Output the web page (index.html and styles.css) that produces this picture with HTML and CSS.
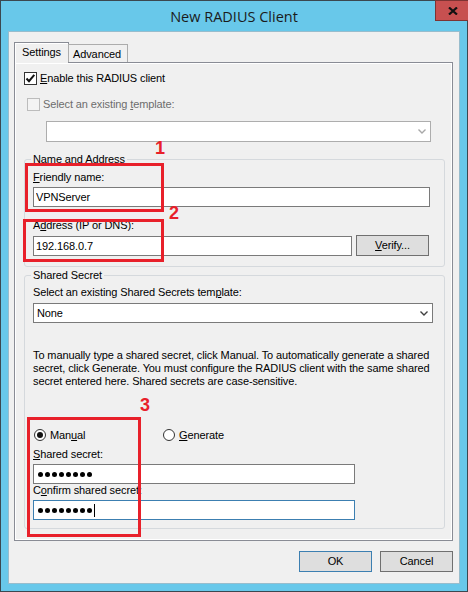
FILE: index.html
```html
<!DOCTYPE html>
<html lang="en">
<head>
    <meta charset="UTF-8">
    <meta name="viewport" content="width=device-width, initial-scale=1.0">
    <title>New RADIUS Client</title>
    <link rel="stylesheet" href="styles.css">
</head>
<body>
    <div class="window">
        <div class="titlebar">
            <span class="title">New RADIUS Client</span>
            <button class="close-btn" type="button" aria-label="Close">
                <svg width="10" height="8" viewBox="0 0 10 8"><path d="M1 0.5 L9 7.5 M9 0.5 L1 7.5" stroke="#111" stroke-width="2.2"/></svg>
            </button>
        </div>

        <div class="client">
            <div class="tabs">
                <div class="tab active">Settings</div>
                <div class="tab">Advanced</div>
            </div>

            <div class="tab-panel">
                <label class="check-row">
                    <span class="checkbox"><svg width="11" height="11" viewBox="0 0 11 11"><path d="M1.5 5.5 L4 8.2 L9.3 1.8" fill="none" stroke="#111" stroke-width="2"/></svg></span>
                    <span><u>E</u>nable this RADIUS client</span>
                </label>
                <label class="check-row disabled template-row">
                    <span class="checkbox"></span>
                    <span>Select an existing <u>t</u>emplate:</span>
                </label>
                <div class="combo combo-template disabled">
                    <span></span>
                    <svg width="8" height="5" viewBox="0 0 8 5"><path d="M0.5 0.5 L4 4 L7.5 0.5" fill="none" stroke="#a8a8a8" stroke-width="1.4"/></svg>
                </div>

                <fieldset class="group group-address">
                    <legend>Name and Address</legend>
                    <div class="field-label"><u>F</u>riendly name:</div>
                    <input class="textbox tb-friendly" type="text" value="VPNServer">
                    <div class="field-label spaced">A<u>d</u>dress (IP or DNS):</div>
                    <div class="address-row">
                        <input class="textbox tb-address" type="text" value="192.168.0.7">
                        <button class="btn" type="button"><u>V</u>erify...</button>
                    </div>
                </fieldset>

                <fieldset class="group group-secret">
                    <legend>Shared Secret</legend>
                    <div class="field-label">Select an existing Shared Secrets tem<u>p</u>late:</div>
                    <div class="combo combo-secret">
                        <span>None</span>
                        <svg width="8" height="5" viewBox="0 0 8 5"><path d="M0.5 0.5 L4 4 L7.5 0.5" fill="none" stroke="#404040" stroke-width="1.4"/></svg>
                    </div>
                    <p class="hint">To manually type a shared secret, click Manual. To automatically generate a shared<br>secret, click Generate. You must configure the RADIUS client with the same shared<br>secret entered here. Shared secrets are case-sensitive.</p>
                    <div class="radio-row">
                        <label class="radio-option manual"><span class="radio checked"></span><span>Man<u>u</u>al</span></label>
                        <label class="radio-option"><span class="radio"></span><span><u>G</u>enerate</span></label>
                    </div>
                    <div class="field-label secret-label"><u>S</u>hared secret:</div>
                    <div class="textbox tb-secret">
                        <span class="dot"></span><span class="dot"></span><span class="dot"></span><span class="dot"></span><span class="dot"></span><span class="dot"></span><span class="dot"></span><span class="dot"></span>
                    </div>
                    <div class="field-label">C<u>o</u>nfirm shared secret:</div>
                    <div class="textbox tb-secret focused">
                        <span class="dot"></span><span class="dot"></span><span class="dot"></span><span class="dot"></span><span class="dot"></span><span class="dot"></span><span class="dot"></span><span class="dot"></span><span class="caret"></span>
                    </div>
                </fieldset>
            </div>

            <div class="button-row">
                <button class="btn btn-default" type="button">OK</button>
                <button class="btn" type="button">Cancel</button>
            </div>
        </div>

        <!-- annotation overlay -->
        <div class="mark mark-1"></div>
        <div class="mark mark-2"></div>
        <div class="mark mark-3"></div>
        <span class="mark-num num-1">1</span>
        <span class="mark-num num-2">2</span>
        <span class="mark-num num-3">3</span>
    </div>
</body>
</html>
```

FILE: styles.css
```css
body { margin: 0; font-family: "Liberation Sans", Arial, sans-serif; font-size: 11px; line-height: 13px; color: #000; letter-spacing: -0.11px; }
u { text-decoration: underline; text-underline-offset: 1px; }

.window { position: relative; width: 468px; height: 592px; box-sizing: border-box; border: 1px solid #3b4850; background: #68c8ea; padding: 0 7px 7px; display: flex; flex-direction: column; }

.titlebar { height: 30px; display: flex; justify-content: center; align-items: center; }
.title { font-family: "Open Sans", sans-serif; font-size: 14.5px; letter-spacing: 0; color: #1b1b1b; margin-top: 1px; }
.close-btn { position: absolute; top: -1px; right: -3px; width: 35px; height: 21px; padding: 0; border: 1px solid #7d3333; background: #c75050; display: flex; align-items: center; justify-content: center; }

.client { flex: 1; background: #f0f0f0; border: 1px solid #98bdcd; padding: 10px 6px 0 5px; display: flex; flex-direction: column; }

.tabs { display: flex; align-items: flex-end; margin-bottom: -1px; position: relative; z-index: 1; }
.tab { box-sizing: border-box; border: 1px solid #acacac; border-bottom: none; background: #f0f0f0; padding: 3px 0 0 4px; }
.tab.active { width: 55px; height: 21px; border-color: #898c95; padding-left: 7px; box-shadow: inset 1px 1px 0 #fff; }
.tab:not(.active) { width: 60px; height: 18px; margin-left: -1px; margin-bottom: 1px; }

.tab-panel { height: 479px; box-sizing: border-box; border: 1px solid #898c95; box-shadow: inset 0 0 0 1px #fff; padding: 9px 7px 9px 9px; display: flex; flex-direction: column; }

.check-row { display: flex; align-items: center; gap: 3px; height: 13px; }
.checkbox { width: 13px; height: 13px; box-sizing: border-box; border: 1px solid #333; background: #fff; display: flex; align-items: center; justify-content: center; }
.check-row.disabled { color: #6d6d6d; }
.check-row.disabled .checkbox { border-color: #bcbcbc; background: #f3f3f3; }
.template-row { margin: 13px 0 0 3px; }

.combo { height: 21px; box-sizing: border-box; border: 1px solid #7a7a7a; background: #fff; display: flex; align-items: center; justify-content: space-between; padding: 0 4px 0 3px; }
.combo-template { width: 385px; margin: 10px 0 0 22px; border-color: #adadad; }
.combo-secret { width: 400px; height: 20px; margin-top: 4px; }

.group { margin: 11px 0 0; padding: 5px 8px 10px; border: 1px solid #d5d9dd; border-radius: 3px; min-width: 0; }
.group legend { padding: 0 2px; margin-left: -2px; }
.group-secret { margin-top: 2px; padding-top: 4px; padding-bottom: 8px; }

.field-label { height: 13px; }
.field-label.spaced { margin-top: 12px; }

.textbox { display: block; height: 20px; box-sizing: border-box; border: 1px solid #7a7a7a; background: #fff; margin: 3px 0 0; padding: 0 2px; font: inherit; letter-spacing: inherit; color: #000; outline: none; }
.tb-friendly { width: 397px; }
.address-row { display: flex; align-items: center; gap: 4px; margin-top: 3px; }
.address-row .textbox { margin: 0; }
.tb-address { width: 319px; }

.hint { margin: 26px 0 0; }

.radio-row { display: flex; align-items: center; height: 14px; margin-top: 40px; padding-left: 1px; }
.radio-option { display: flex; align-items: center; gap: 4px; }
.radio-option.manual { width: 129px; }
.radio { width: 12px; height: 12px; box-sizing: border-box; border: 1px solid #333; border-radius: 50%; background: #fff; display: flex; align-items: center; justify-content: center; }
.radio.checked::after { content: ""; width: 6px; height: 6px; border-radius: 50%; background: #111; }

.secret-label { margin-top: 6px; }
.tb-secret { width: 322px; display: flex; align-items: center; gap: 2px; padding-left: 4px; }
.tb-secret.focused { border-color: #3c7fb1; }
.dot { width: 5px; height: 5px; border-radius: 50%; background: #000; }
.caret { width: 1px; height: 13px; background: #000; margin-left: 0; }

.button-row { display: flex; justify-content: flex-end; gap: 8px; margin-top: 10px; }
.btn { width: 73px; height: 21px; box-sizing: border-box; border: 1px solid #707070; background: #dedede; padding: 0; font: inherit; letter-spacing: inherit; color: #000; }
.btn-default { border-color: #3c7fb1; }

.mark { position: absolute; border: 3px solid #e8202a; box-sizing: border-box; }
.mark-1 { left: 24px; top: 162px; width: 139px; height: 49px; }
.mark-2 { left: 22px; top: 218px; width: 141px; height: 43px; }
.mark-3 { left: 26px; top: 416px; width: 114px; height: 120px; }
.mark-num { position: absolute; font-size: 18px; line-height: 18px; font-weight: bold; color: #e8202a; letter-spacing: 0; }
.num-1 { left: 154px; top: 138px; }
.num-2 { left: 168px; top: 203px; }
.num-3 { left: 139px; top: 395px; }
```
